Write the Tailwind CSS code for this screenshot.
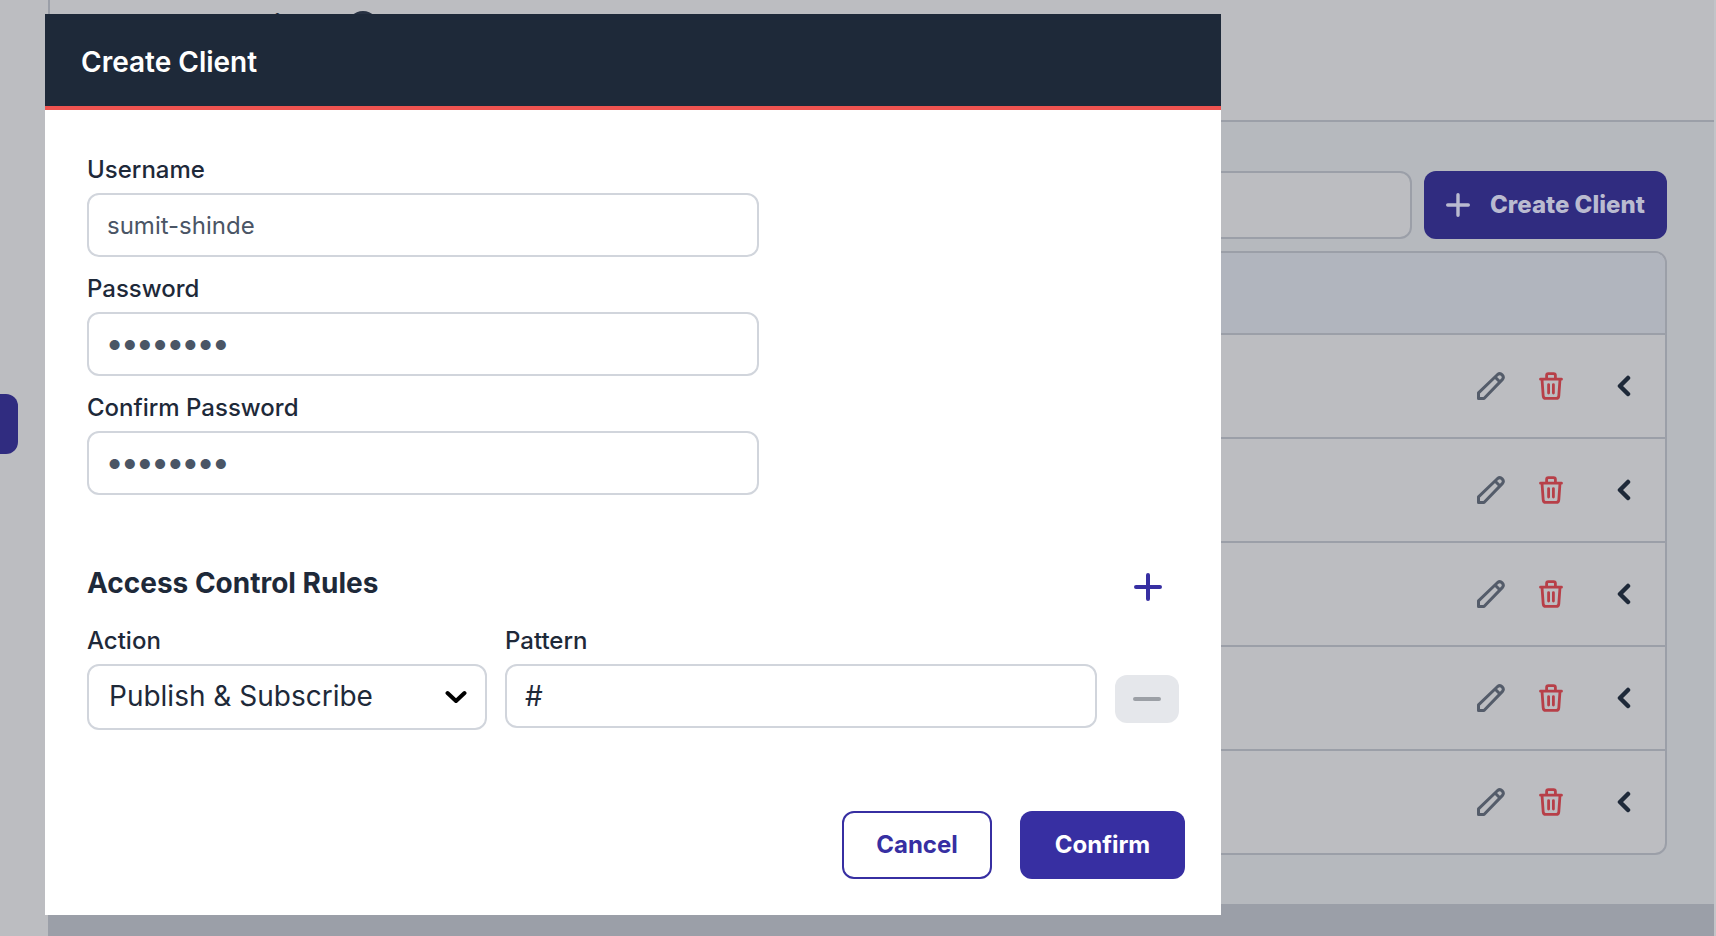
<!DOCTYPE html>
<html lang="en">
<head>
    <meta charset="UTF-8">
    <meta name="viewport" content="width=device-width, initial-scale=1.0">
    <title>Create Client</title>
    <script src="https://cdn.jsdelivr.net/npm/@tailwindcss/browser@4"></script>
</head>
<body class="font-['Inter',sans-serif] text-2xl text-gray-800 bg-[#bcbdc1]">
    <!-- Icons -->
    <svg class="hidden">
        <symbol id="pencil" viewBox="0 0 28 28" fill="none" stroke="currentColor" stroke-width="3" stroke-linejoin="round">
            <path d="M1.500 26.500v-5.600L20.600 2.500a3.500 3.500 0 0 1 4.900 4.900L7 26.500z"/>
            <path d="M18 5l5 5"/>
        </symbol>
        <symbol id="trash" viewBox="0 0 24 28" fill="none" stroke="currentColor" stroke-width="2.800" stroke-linecap="round" stroke-linejoin="round">
            <path d="M1.500 7.200h21M7.600 7V3.400a1.800 1.800 0 0 1 1.800-1.800h5.200a1.800 1.800 0 0 1 1.800 1.800V7M3 7.200l1.200 16.600a2.800 2.800 0 0 0 2.800 2.600h10a2.800 2.800 0 0 0 2.800-2.600L21 7.200M9.600 12.600v8.400M14.400 12.600v8.400"/>
        </symbol>
        <symbol id="chevron" viewBox="0 0 14 22" fill="none" stroke="currentColor" stroke-width="4.500" stroke-linecap="round" stroke-linejoin="round">
            <path d="M11 3L3 11l8 8"/>
        </symbol>
        <symbol id="plus" viewBox="0 0 28 28" fill="none" stroke="currentColor" stroke-width="4" stroke-linecap="round">
            <path d="M2 14h24M14 2v24"/>
        </symbol>
    </svg>

    <div class="flex h-screen overflow-hidden">
        <!-- Sidebar -->
        <aside class="w-[50px] shrink-0 border-r-2 border-[#9b9fa8] pt-[394px]">
            <button type="button" aria-label="Clients" class="block w-[18px] h-[60px] rounded-r-xl bg-[#302c80]"></button>
        </aside>

        <!-- Page -->
        <div class="flex-1 min-w-0 flex flex-col">
            <header class="h-[122px] shrink-0 border-b-2 border-[#9b9fa8] flex items-start gap-7 pl-12 pt-[11px]">
                <h1 class="text-[32px] leading-8 font-semibold">MQTT Service</h1>
                <svg class="size-8" viewBox="0 0 32 32" fill="none"><circle cx="16" cy="16" r="16" fill="#273142"/><path d="M16 14v9M16 9v2" stroke="#bcbdc1" stroke-width="3"/></svg>
            </header>

            <main class="flex-1 bg-[#b6b9be] pt-[49px] pl-12 pr-[47px]">
                <div class="flex gap-3 h-[68px]">
                    <input type="search" aria-label="Search clients" class="flex-1 min-w-0 rounded-xl border-2 border-[#9b9fa8] bg-[#bcbdc1] px-4">
                    <button type="button" class="flex items-center gap-5 w-[243px] pl-[22px] rounded-xl bg-[#302c80] text-[#babbd0] font-extrabold whitespace-nowrap">
                        <svg class="size-6"><use href="#plus"/></svg>
                        Create Client
                    </button>
                </div>

                <ul class="mt-3 rounded-xl border-2 border-[#9b9fa8] bg-[#bcbdc1] overflow-hidden divide-y-2 divide-[#9b9fa8]">
                    <li class="h-[82px] bg-[#b1b5be]"></li>
                    <li class="h-[104px] flex items-center justify-end pr-[34px]">
                        <button type="button" aria-label="Edit" class="mr-[34px] text-[#545c6a]"><svg class="size-7"><use href="#pencil"/></svg></button>
                        <button type="button" aria-label="Delete" class="mr-[54px] text-[#b73f48]"><svg class="w-6 h-7"><use href="#trash"/></svg></button>
                        <button type="button" aria-label="Expand"><svg class="w-[14px] h-[22px]"><use href="#chevron"/></svg></button>
                    </li>
                    <li class="h-[104px] flex items-center justify-end pr-[34px]">
                        <button type="button" aria-label="Edit" class="mr-[34px] text-[#545c6a]"><svg class="size-7"><use href="#pencil"/></svg></button>
                        <button type="button" aria-label="Delete" class="mr-[54px] text-[#b73f48]"><svg class="w-6 h-7"><use href="#trash"/></svg></button>
                        <button type="button" aria-label="Expand"><svg class="w-[14px] h-[22px]"><use href="#chevron"/></svg></button>
                    </li>
                    <li class="h-[104px] flex items-center justify-end pr-[34px]">
                        <button type="button" aria-label="Edit" class="mr-[34px] text-[#545c6a]"><svg class="size-7"><use href="#pencil"/></svg></button>
                        <button type="button" aria-label="Delete" class="mr-[54px] text-[#b73f48]"><svg class="w-6 h-7"><use href="#trash"/></svg></button>
                        <button type="button" aria-label="Expand"><svg class="w-[14px] h-[22px]"><use href="#chevron"/></svg></button>
                    </li>
                    <li class="h-[104px] flex items-center justify-end pr-[34px]">
                        <button type="button" aria-label="Edit" class="mr-[34px] text-[#545c6a]"><svg class="size-7"><use href="#pencil"/></svg></button>
                        <button type="button" aria-label="Delete" class="mr-[54px] text-[#b73f48]"><svg class="w-6 h-7"><use href="#trash"/></svg></button>
                        <button type="button" aria-label="Expand"><svg class="w-[14px] h-[22px]"><use href="#chevron"/></svg></button>
                    </li>
                    <li class="h-[102px] flex items-center justify-end pr-[34px]">
                        <button type="button" aria-label="Edit" class="mr-[34px] text-[#545c6a]"><svg class="size-7"><use href="#pencil"/></svg></button>
                        <button type="button" aria-label="Delete" class="mr-[54px] text-[#b73f48]"><svg class="w-6 h-7"><use href="#trash"/></svg></button>
                        <button type="button" aria-label="Expand"><svg class="w-[14px] h-[22px]"><use href="#chevron"/></svg></button>
                    </li>
                </ul>
            </main>

            <footer class="h-8 shrink-0 bg-[#9b9fa8]"></footer>
        </div>
        <div class="w-0.5 shrink-0 bg-[#c3c4c8]"></div>
    </div>

    <!-- Create client dialog -->
    <div class="fixed inset-0 pt-[14px] pl-[45px]">
        <form role="dialog" aria-labelledby="dialog-title" class="w-full max-w-[1176px] bg-white">
            <header class="h-24 flex items-center px-9 pt-1 bg-gray-800 border-b-4 border-[#ef5350]">
                <h2 id="dialog-title" class="text-[28px] leading-9 font-semibold text-white">Create Client</h2>
            </header>

            <div class="px-[42px] pt-11">
                <div class="w-[672px] max-w-full flex flex-col gap-4 font-medium">
                    <div>
                        <label for="username" class="block leading-8 mb-[7px]">Username</label>
                        <input id="username" type="text" value="sumit-shinde" class="block w-full h-16 px-[18px] rounded-xl border-2 border-gray-300 font-normal text-gray-600">
                    </div>
                    <div>
                        <label for="password" class="block leading-8 mb-[7px]">Password</label>
                        <input id="password" type="password" value="12345678" class="block w-full h-16 px-[18px] pb-1 rounded-xl border-2 border-gray-300 text-[32px] font-bold text-gray-600">
                    </div>
                    <div>
                        <label for="confirm" class="block leading-8 mb-[7px]">Confirm Password</label>
                        <input id="confirm" type="password" value="12345678" class="block w-full h-16 px-[18px] pb-1 rounded-xl border-2 border-gray-300 text-[32px] font-bold text-gray-600">
                    </div>
                </div>

                <!-- Rules -->
                <div class="mt-[70px] flex items-center justify-between pr-[17px]">
                    <h3 class="text-[28px] leading-9 font-bold">Access Control Rules</h3>
                    <button type="button" aria-label="Add rule" class="text-[#372fa2] pt-2"><svg class="size-7"><use href="#plus"/></svg></button>
                </div>
                <div class="mt-6 flex items-start gap-[18px]">
                    <div class="w-[400px]">
                        <label for="action" class="block leading-8 mb-[7px] font-medium">Action</label>
                        <div class="relative">
                            <select id="action" class="block w-full h-[66px] pl-5 appearance-none rounded-xl border-2 border-gray-300 bg-white text-[28px]">
                                <option>Publish &amp; Subscribe</option>
                            </select>
                            <svg class="absolute right-5 top-[26px] w-[22px] h-[14px] text-black pointer-events-none" viewBox="0 0 22 14" fill="none" stroke="currentColor" stroke-width="4" stroke-linecap="round" stroke-linejoin="round"><path d="M2.500 3l8.500 8 8.500-8"/></svg>
                        </div>
                    </div>
                    <div class="flex-1 min-w-0">
                        <label for="pattern" class="block leading-8 mb-[7px] font-medium">Pattern</label>
                        <input id="pattern" type="text" value="#" class="block w-full h-16 px-[18px] rounded-xl border-2 border-gray-300 text-[28px]">
                    </div>
                    <button type="button" aria-label="Remove rule" disabled class="mt-[50px] w-16 h-12 rounded-xl bg-gray-200 text-[#9ca0a6] flex items-center justify-center">
                        <svg class="size-7" viewBox="0 0 28 28" stroke="currentColor" stroke-width="4" stroke-linecap="round"><path d="M2 14h24"/></svg>
                    </button>
                </div>
            </div>

            <footer class="mt-[81px] pb-9 px-9 flex justify-end gap-7 font-bold">
                <button type="button" class="w-[150px] h-[68px] rounded-xl border-2 border-[#372fa2] text-[#372fa2]">Cancel</button>
                <button type="submit" class="w-[165px] h-[68px] rounded-xl bg-[#372fa2] text-white">Confirm</button>
            </footer>
        </form>
    </div>
</body>
</html>
